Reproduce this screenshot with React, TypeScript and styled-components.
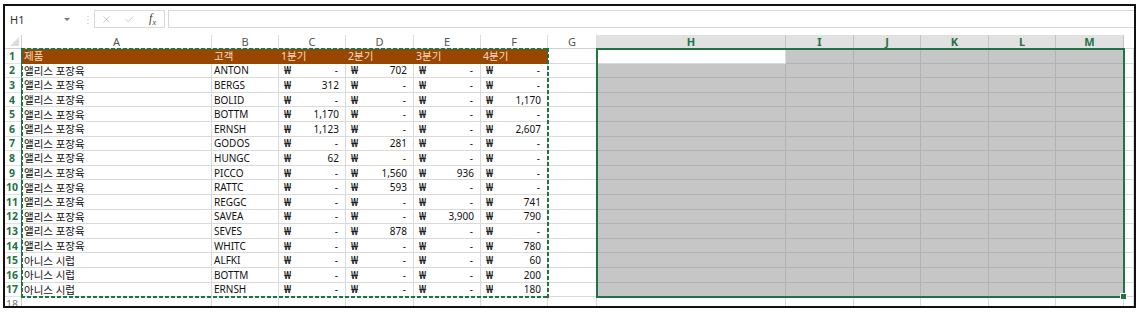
import React from "react";
import styled, { css, createGlobalStyle } from "styled-components";
import { X, Check } from "lucide-react";

const GREEN = "#217346";
const GRID = "#dadada";

const GlobalStyle = createGlobalStyle`
  html, body {
    margin: 0;
    padding: 0;
    background: #ffffff;
  }
  body {
    font-family: "Noto Sans", "Noto Sans CJK KR", sans-serif;
  }
`;

const Frame = styled.div`
  box-sizing: border-box;
  margin: 4px 0 0 3px;
  width: 1133px;
  height: 304px;
  border: 2px solid #111;
  display: flex;
  flex-direction: column;
  overflow: hidden;
  background: #fff;
`;

const FormulaBar = styled.div`
  flex: none;
  height: 29px;
  box-sizing: border-box;
  padding-top: 4px;
  display: flex;
  align-items: flex-start;
`;

const NameBox = styled.div`
  width: 73px;
  height: 18px;
  box-sizing: border-box;
  padding: 0 8px 0 5px;
  display: flex;
  align-items: center;
  justify-content: space-between;
  font-size: 11px;
  color: #333;
`;

const DropArrow = styled.span`
  width: 0;
  height: 0;
  border-left: 3px solid transparent;
  border-right: 3px solid transparent;
  border-top: 3px solid #777;
`;

const Grip = styled.div`
  width: 16px;
  height: 18px;
  display: flex;
  align-items: center;
  padding-left: 5px;
  box-sizing: border-box;
  color: #c4c4c4;
  font-size: 10px;
`;

const ButtonBox = styled.div`
  width: 71px;
  height: 18px;
  box-sizing: border-box;
  border: 1px solid #d8d8d8;
  display: flex;
  align-items: center;
`;

const BarButton = styled.span<{ $dark?: boolean }>`
  width: 24px;
  display: flex;
  justify-content: center;
  align-items: center;
  color: ${(p) => (p.$dark ? "#555" : "#aaa")};
`;

const Fx = styled.i`
  font-family: "Liberation Serif", serif;
  font-size: 12px;
  color: #444;
  sub {
    font-size: 8px;
  }
`;

const FormulaInput = styled.div`
  flex: 1;
  margin-left: 3px;
  height: 18px;
  box-sizing: border-box;
  border: 1px solid #d8d8d8;
  border-right: none;
`;

const tracks = css`
  display: grid;
  grid-template-columns: 17px 190px 67px 67px 68px 67px 67px 49px 189px 68px 67px 68px 67px 68px 1fr;
  grid-template-rows: 14px repeat(18, 14.6px);
`;

const SheetArea = styled.div`
  position: relative;
`;

const Sheet = styled.div`
  ${tracks}
  font-size: 10px;
  color: #111;
`;

// same tracks, laid over the cells for the copy marquee and selection border
const OverlayGrid = styled.div`
  ${tracks}
  position: absolute;
  inset: 0;
  pointer-events: none;
`;

const Corner = styled.div`
  position: relative;
  border-right: 1px solid #cfcfcf;
  border-bottom: 1px solid #cfcfcf;
  &::after {
    content: "";
    position: absolute;
    right: 2px;
    bottom: 2px;
    border-left: 9px solid transparent;
    border-bottom: 9px solid #dcdcdc;
  }
`;

const ColHead = styled.div<{ $sel?: boolean }>`
  box-sizing: border-box;
  display: flex;
  align-items: center;
  justify-content: center;
  font-size: 11px;
  background: ${(p) => (p.$sel ? "#e1e1e1" : "#fff")};
  color: ${(p) => (p.$sel ? GREEN : "#555")};
  font-weight: ${(p) => (p.$sel ? 700 : 400)};
  border-right: 1px solid ${(p) => (p.$sel ? "#c4c4c4" : "#dcdcdc")};
  border-bottom: 1px solid ${(p) => (p.$sel ? GREEN : "#cfcfcf")};
`;

const Blank = styled.div`
  border-bottom: 1px solid ${GRID};
`;

const RowHead = styled.div<{ $sel?: boolean }>`
  box-sizing: border-box;
  display: flex;
  align-items: center;
  justify-content: center;
  padding-right: 2px;
  font-size: 10.5px;
  background: #fff;
  color: ${(p) => (p.$sel ? GREEN : "#777")};
  font-weight: ${(p) => (p.$sel ? 700 : 400)};
  border-right: 1px solid ${(p) => (p.$sel ? GREEN : "#cfcfcf")};
  border-bottom: 1px solid #e2e2e2;
`;

const Cell = styled.div<{ $fill?: string; $ink?: string; $line?: string }>`
  box-sizing: border-box;
  display: flex;
  align-items: center;
  padding: 0 2px;
  white-space: nowrap;
  overflow: hidden;
  background: ${(p) => p.$fill ?? "#fff"};
  color: ${(p) => p.$ink ?? "#111"};
  border-right: 1px solid ${(p) => p.$line ?? GRID};
  border-bottom: 1px solid ${(p) => p.$line ?? GRID};
`;

const Korean = styled.span`
  font-size: 10.5px;
`;

const Money = styled(Cell)`
  justify-content: space-between;
  padding: 0 6px 0 5px;
`;

const Won = styled.span`
  font-weight: 600;
`;

const Dash = styled.span`
  margin-right: 1px;
`;

const dash = (dir: string) =>
  `repeating-linear-gradient(${dir}, ${GREEN} 0 4px, transparent 4px 6px)`;

const CopyMarquee = styled.div`
  grid-column: 2 / 8;
  grid-row: 2 / 19;
  margin: -1px;
  background:
    ${dash("90deg")} left top / 100% 2px no-repeat,
    ${dash("90deg")} left bottom / 100% 2px no-repeat,
    ${dash("180deg")} left top / 2px 100% no-repeat,
    ${dash("180deg")} right top / 2px 100% no-repeat;
`;

const SelectionBox = styled.div`
  grid-column: 9 / 15;
  grid-row: 2 / 19;
  margin: -1px;
  border: 2px solid ${GREEN};
  position: relative;
`;

const FillHandle = styled.span`
  position: absolute;
  right: -4px;
  bottom: -4px;
  width: 5px;
  height: 5px;
  background: ${GREEN};
  border: 1px solid #fff;
`;

const letters = ["A", "B", "C", "D", "E", "F", "G", "H", "I", "J", "K", "L", "M"];
const headers = ["제품", "고객", "1분기", "2분기", "3분기", "4분기"];

const ALICE = "앨리스 포장육";
const ANISE = "아니스 시럽";

const rows: [string, string, string, string, string, string][] = [
  [ALICE, "ANTON", "-", "702", "-", "-"],
  [ALICE, "BERGS", "312", "-", "-", "-"],
  [ALICE, "BOLID", "-", "-", "-", "1,170"],
  [ALICE, "BOTTM", "1,170", "-", "-", "-"],
  [ALICE, "ERNSH", "1,123", "-", "-", "2,607"],
  [ALICE, "GODOS", "-", "281", "-", "-"],
  [ALICE, "HUNGC", "62", "-", "-", "-"],
  [ALICE, "PICCO", "-", "1,560", "936", "-"],
  [ALICE, "RATTC", "-", "593", "-", "-"],
  [ALICE, "REGGC", "-", "-", "-", "741"],
  [ALICE, "SAVEA", "-", "-", "3,900", "790"],
  [ALICE, "SEVES", "-", "878", "-", "-"],
  [ALICE, "WHITC", "-", "-", "-", "780"],
  [ANISE, "ALFKI", "-", "-", "-", "60"],
  [ANISE, "BOTTM", "-", "-", "-", "200"],
  [ANISE, "ERNSH", "-", "-", "-", "180"],
];

const SELECTED = ["H", "I", "J", "K", "L", "M"];

const RightCells = ({ row }: { row: number }) => (
  <>
    <Cell />
    {SELECTED.map((l) =>
      l === "H" && row === 1 ? (
        <Cell key={l} />
      ) : (
        <Cell key={l} $fill="#c6c6c6" $line="#b2b2b2" />
      )
    )}
    <Cell />
  </>
);

const App: React.FC = () => {
  return (
    <>
      <GlobalStyle />
      <Frame>
        <FormulaBar>
          <NameBox>
            H1
            <DropArrow />
          </NameBox>
          <Grip>⋮</Grip>
          <ButtonBox>
            <BarButton>
              <X size={11} strokeWidth={1.4} />
            </BarButton>
            <BarButton>
              <Check size={11} strokeWidth={1.4} />
            </BarButton>
            <BarButton $dark>
              <Fx>
                f<sub>x</sub>
              </Fx>
            </BarButton>
          </ButtonBox>
          <FormulaInput />
        </FormulaBar>

        <SheetArea>
          <Sheet>
            <Corner />
            {letters.map((l) => (
              <ColHead key={l} $sel={SELECTED.includes(l)}>
                {l}
              </ColHead>
            ))}
            <Blank />

            <RowHead $sel>1</RowHead>
            {headers.map((h) => (
              <Cell key={h} $fill="#994700" $ink="#f6dcc4" $line="#994700">
                <Korean>{h}</Korean>
              </Cell>
            ))}
            <RightCells row={1} />

            {rows.map((r, i) => (
              <React.Fragment key={i}>
                <RowHead $sel>{i + 2}</RowHead>
                <Cell>
                  <Korean>{r[0]}</Korean>
                </Cell>
                <Cell>{r[1]}</Cell>
                {r.slice(2).map((v, j) => (
                  <Money key={j}>
                    <Won>₩</Won>
                    {v === "-" ? <Dash>-</Dash> : <span>{v}</span>}
                  </Money>
                ))}
                <RightCells row={i + 2} />
              </React.Fragment>
            ))}

            <RowHead>18</RowHead>
            {letters.map((l) => (
              <Cell key={l} />
            ))}
            <Cell />
          </Sheet>

          <OverlayGrid>
            <CopyMarquee />
            <SelectionBox>
              <FillHandle />
            </SelectionBox>
          </OverlayGrid>
        </SheetArea>
      </Frame>
    </>
  );
};

export default App;
